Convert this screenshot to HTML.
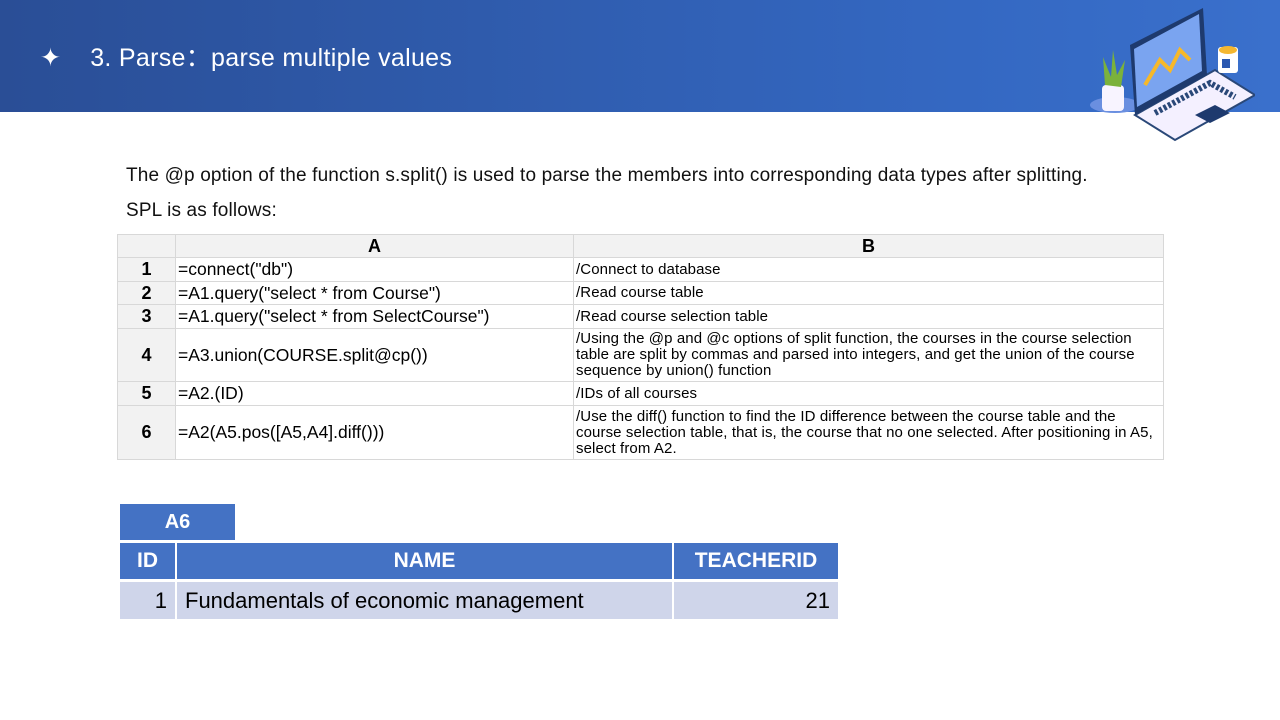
<!DOCTYPE html>
<html><head><style>
*{margin:0;padding:0;box-sizing:border-box}
body{width:1280px;height:720px;position:relative;background:#fff;font-family:"Liberation Sans",sans-serif;overflow:hidden}
.hdr{position:absolute;left:0;top:0;width:1280px;height:112px;background:linear-gradient(90deg,#2a4e96 0%,#3468c2 75%,#3a70cc 100%)}
.t{position:absolute;left:40px;top:38px;color:#fff;font-size:25px;letter-spacing:0.3px}
.p{position:absolute;left:126px;font-size:19px;color:#111;letter-spacing:0.15px}
table{border-collapse:collapse;position:absolute}
.s{left:117px;top:234px;width:1047px;font-size:17.5px}
.s td{border:1px solid #d8d8d8;padding:0 2px;vertical-align:middle;line-height:17px}
.s td.n{background:#f2f2f2;text-align:center;font-weight:bold;font-size:18px;width:58px}
.s td.b{font-size:15px;line-height:16px;letter-spacing:0.1px}
.s tr.h td{background:#f2f2f2;text-align:center;font-weight:bold;height:23px;font-size:18px}
.c{position:absolute;display:flex;align-items:center;padding:0 8px}
</style></head><body>
<div class="hdr"></div>
<div class="t">✦&nbsp;&nbsp;&nbsp;&nbsp;3. Parse：parse multiple values</div>
<svg style="position:absolute;left:1085px;top:5px" width="170" height="138" viewBox="0 0 170 138">
<ellipse cx="30" cy="100" rx="25" ry="8" fill="#6a8fe0"/>
<rect x="17" y="80" width="22" height="26" rx="4" fill="#f8f4ff"/>
<path d="M20 80 L18 52 L26 72 L28 45 L32 70 L40 55 L36 82Z" fill="#7bb23b"/>
<path d="M50 110 L130 65 L170 90 L90 135Z" fill="#f4f0ff" stroke="#2a4878" stroke-width="2"/>
<path d="M50 110 L45 40 L118 3 L122 70Z" fill="#1e3a6e"/>
<path d="M52 102 L49 44 L114 9 L117 66Z" fill="#7aa4f0"/>
<path d="M60 80 L75 55 L85 65 L95 45 L105 55" stroke="#f6b82a" stroke-width="4" fill="none"/>
<path d="M110 110 L130 100 L145 108 L125 118Z" fill="#1e3a6e"/>
<path d="M70 108 L125 78 L150 92" stroke="#2a4878" stroke-width="6" stroke-dasharray="3 2" fill="none"/>
<rect x="133" y="42" width="20" height="26" rx="3" fill="#fff"/>
<ellipse cx="143" cy="45" rx="9" ry="4" fill="#f4b730"/>
<rect x="137" y="54" width="8" height="9" fill="#2a58b0"/>
</svg>
<div class="p" style="top:165px">The @p option of the function s.split() is used to parse the members into corresponding data types after splitting.</div>
<div class="p" style="top:200px">SPL is as follows:</div>
<table class="s">
<tr class="h"><td class="n" style="height:23px"></td><td style="width:398px">A</td><td>B</td></tr>
<tr style="height:24px"><td class="n">1</td><td>=connect("db")</td><td class="b">/Connect to database</td></tr>
<tr style="height:23px"><td class="n">2</td><td>=A1.query("select * from Course")</td><td class="b">/Read course table</td></tr>
<tr style="height:24px"><td class="n">3</td><td>=A1.query("select * from SelectCourse")</td><td class="b">/Read course selection table</td></tr>
<tr style="height:53px"><td class="n">4</td><td>=A3.union(COURSE.split@cp())</td><td class="b">/Using the @p and @c options of split function, the courses in the course selection table are split by commas and parsed into integers, and get the union of the course sequence by union() function</td></tr>
<tr style="height:24px"><td class="n">5</td><td>=A2.(ID)</td><td class="b">/IDs of all courses</td></tr>
<tr style="height:54px"><td class="n">6</td><td>=A2(A5.pos([A5,A4].diff()))</td><td class="b">/Use the diff() function to find the ID difference between the course table and the course selection table, that is, the course that no one selected. After positioning in A5, select from A2.</td></tr>
</table>
<div class="c" style="left:120px;top:504px;width:115px;height:36px;background:#4472c4;color:#fff;font-weight:bold;font-size:20px;justify-content:center">A6</div>
<div class="c" style="left:120px;top:543px;width:55px;height:36px;background:#4472c4;color:#fff;font-weight:bold;font-size:21px;justify-content:center">ID</div>
<div class="c" style="left:177px;top:543px;width:495px;height:36px;background:#4472c4;color:#fff;font-weight:bold;font-size:21px;justify-content:center">NAME</div>
<div class="c" style="left:674px;top:543px;width:164px;height:36px;background:#4472c4;color:#fff;font-weight:bold;font-size:21px;justify-content:center">TEACHERID</div>
<div class="c" style="left:120px;top:582px;width:55px;height:37px;background:#cfd5ea;font-size:22px;justify-content:flex-end">1</div>
<div class="c" style="left:177px;top:582px;width:495px;height:37px;background:#cfd5ea;font-size:22px">Fundamentals of economic management</div>
<div class="c" style="left:674px;top:582px;width:164px;height:37px;background:#cfd5ea;font-size:22px;justify-content:flex-end">21</div>
</body></html>
